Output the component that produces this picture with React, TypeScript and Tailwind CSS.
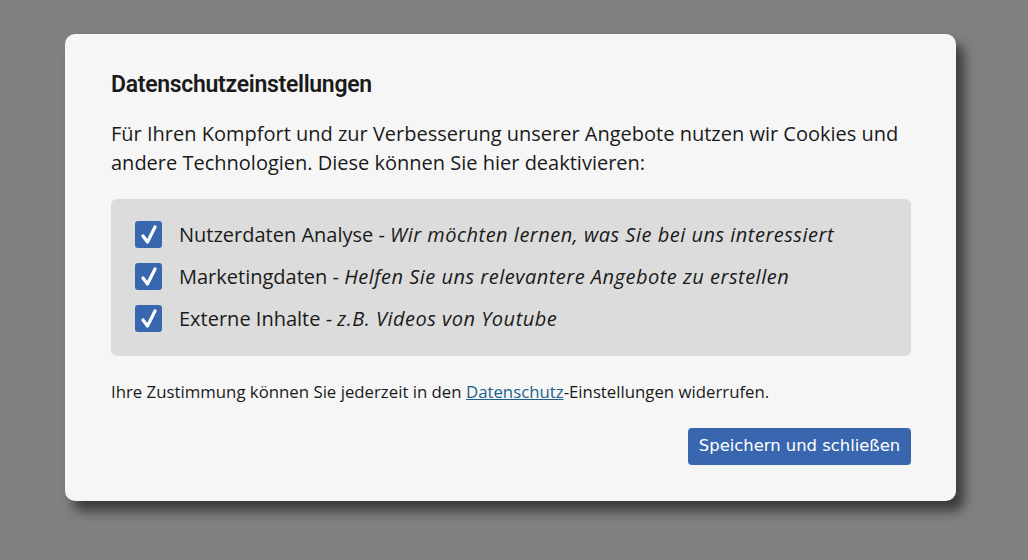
export default function App() {
  const items = [
    ["Nutzerdaten Analyse", "Wir möchten lernen, was Sie bei uns interessiert"],
    ["Marketingdaten", "Helfen Sie uns relevantere Angebote zu erstellen"],
    ["Externe Inhalte", "z.B. Videos von Youtube"],
  ];

  return (
    <div className="w-[1028px] h-[560px] bg-[#808080] pt-[34px] pl-[65px] overflow-hidden">
      <div
        className="w-[891px] h-[467px] bg-[#f6f6f6] rounded-[10px] shadow-[8px_10px_12px_rgba(0,0,0,0.55)] pl-[46px] pr-[45px] pt-[40px] text-[#1a1a1a]"
        style={{ fontFamily: '"Open Sans", "Noto Sans", sans-serif' }}
      >
        <h2 className="text-[23px] font-semibold leading-[22px] tracking-[-0.3px]" style={{ fontFamily: 'Roboto, "Open Sans", sans-serif' }}>
          Datenschutzeinstellungen
        </h2>

        <p className="mt-[23px] text-[20px] leading-[29px]">
          Für Ihren Kompfort und zur Verbesserung unserer Angebote nutzen wir Cookies und andere Technologien. Diese können Sie hier deaktivieren:
        </p>

        <div className="mt-[22px] h-[157px] bg-[#dcdcdc] rounded-[6px] pl-[24px] pt-[22px] flex flex-col gap-[15px]">
          {items.map(([label, desc]) => (
            <div key={label} className="flex items-center h-[27px]">
              <span className="w-[27px] h-[27px] bg-[#3867b0] rounded-[3px] flex items-center justify-center shrink-0">
                <svg width="18" height="20" viewBox="0 0 18 20">
                  <path d="M3 11 L7.5 17 L15 2" fill="none" stroke="white" strokeWidth="3.2" strokeLinecap="round" strokeLinejoin="round" />
                </svg>
              </span>
              <span className="ml-[17px] text-[20px] whitespace-nowrap">
                {label} - <i className="tracking-[0.5px]">{desc}</i>
              </span>
            </div>
          ))}
        </div>

        <p className="mt-[26px] text-[16.8px] leading-[20px]">
          Ihre Zustimmung können Sie jederzeit in den{" "}
          <a href="#" className="text-[#1f5f8b] underline">Datenschutz</a>-Einstellungen widerrufen.
        </p>

        <div className="flex justify-end mt-[26px]">
          <button
            className="w-[223px] h-[37px] bg-[#3867b0] text-white rounded-[4px] text-[16.4px]"
            style={{ fontFamily: '"DejaVu Sans", sans-serif' }}
          >
            Speichern und schließen
          </button>
        </div>
      </div>
    </div>
  );
}
